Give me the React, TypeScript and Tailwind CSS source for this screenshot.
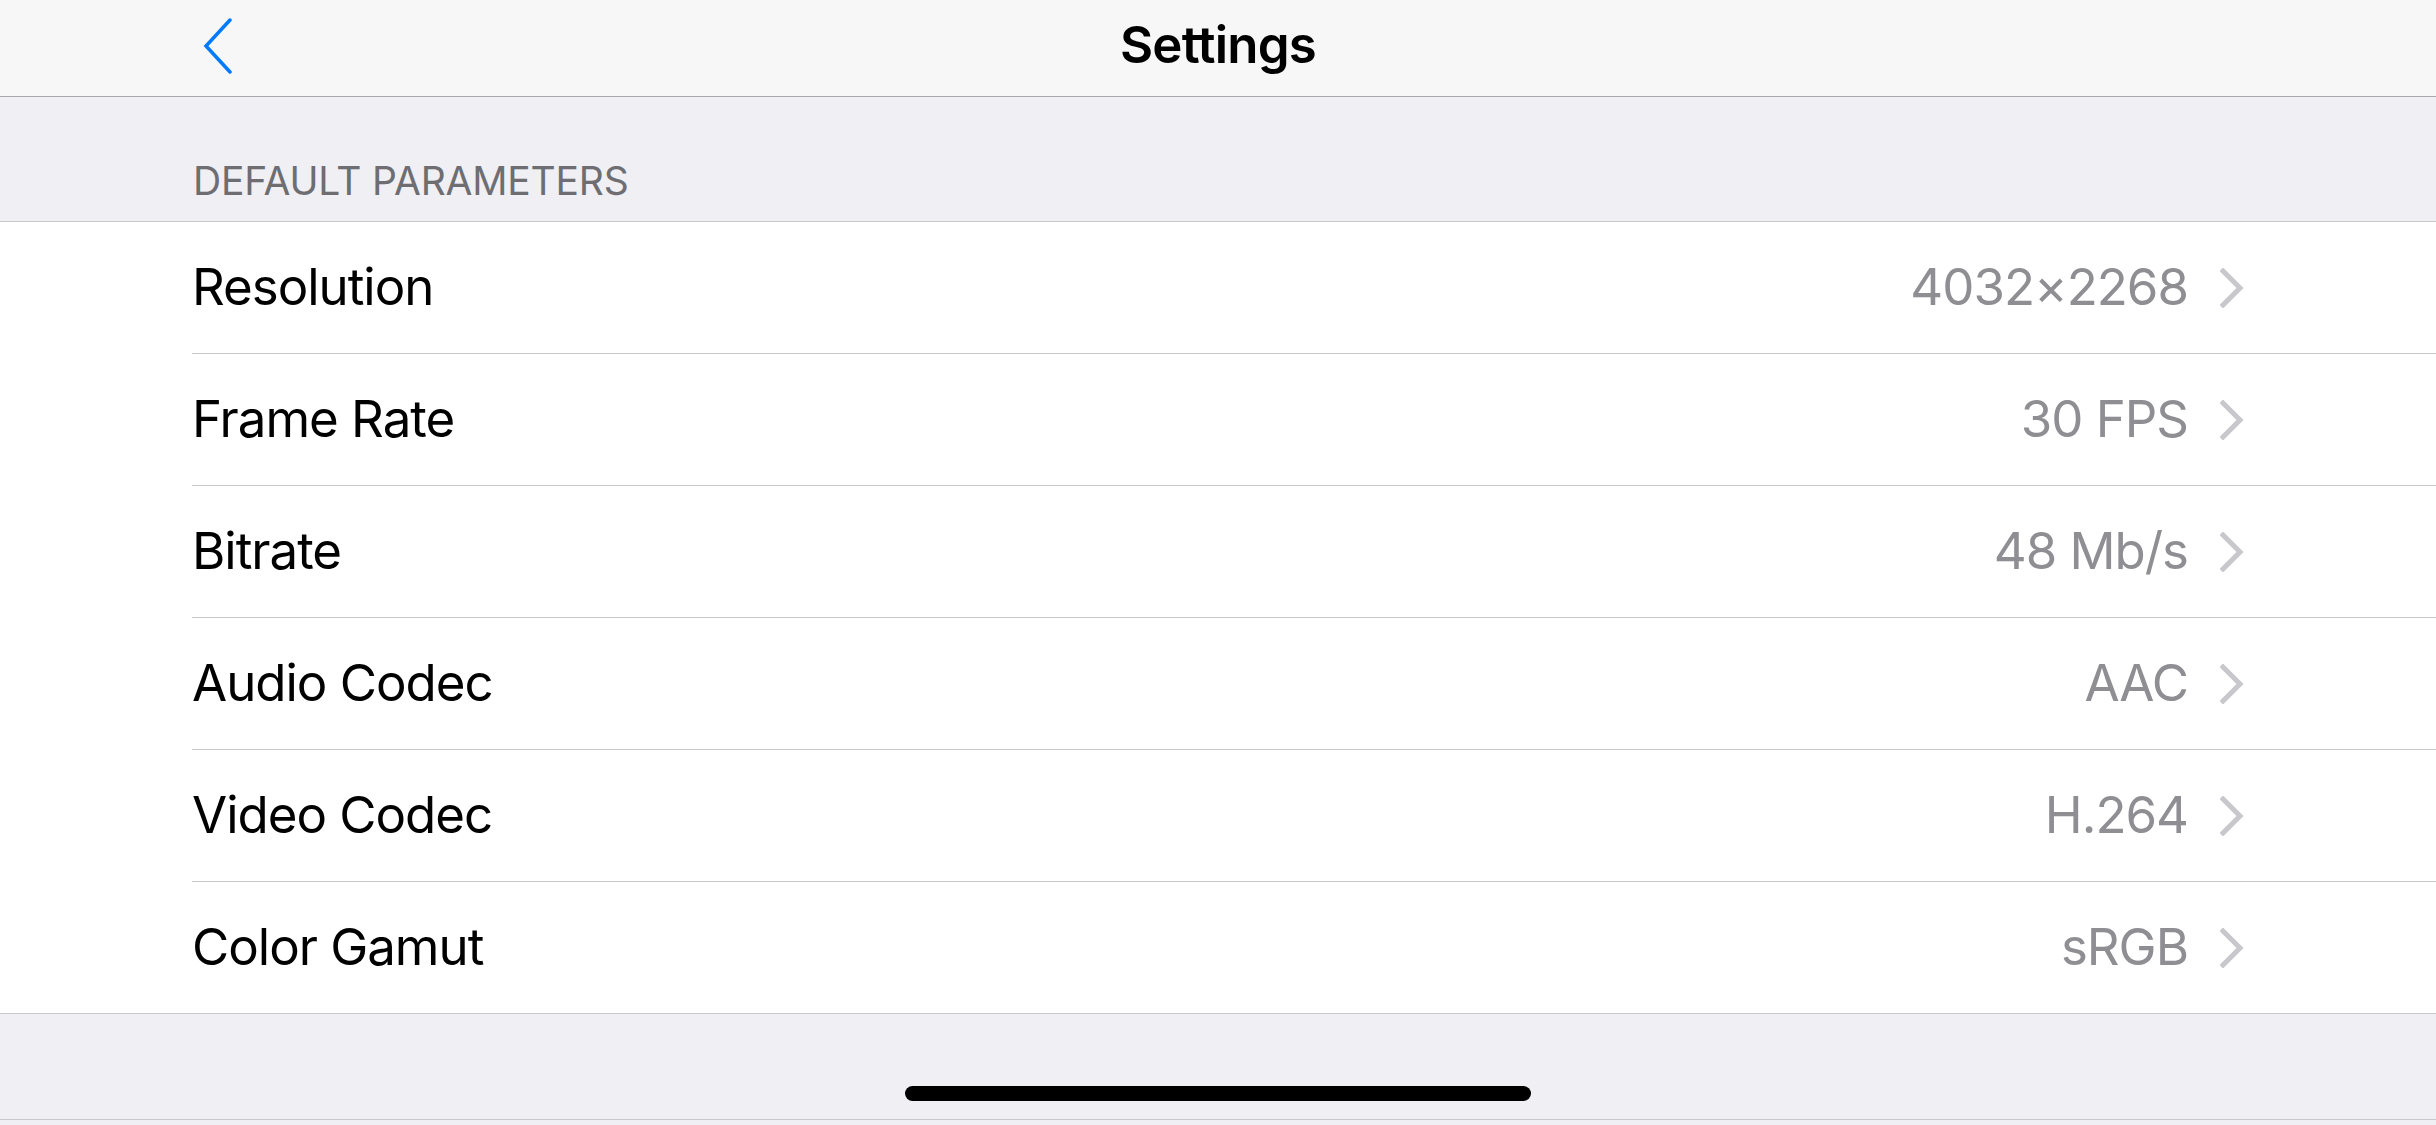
const rows = [
  { label: 'Resolution', value: '4032×2268' },
  { label: 'Frame Rate', value: '30 FPS' },
  { label: 'Bitrate', value: '48 Mb/s' },
  { label: 'Audio Codec', value: 'AAC' },
  { label: 'Video Codec', value: 'H.264' },
  { label: 'Color Gamut', value: 'sRGB' },
];

function BackChevron() {
  return (
    <svg width="30" height="56" viewBox="0 0 30 56" fill="none">
      <polyline
        points="27,2 3,28 27,54"
        stroke="#007aff"
        strokeWidth="3.5"
        strokeLinecap="round"
        strokeLinejoin="miter"
      />
    </svg>
  );
}

function RowChevron() {
  return (
    <svg width="24" height="40" viewBox="0 0 24 40" fill="none">
      <polyline
        points="3,3 20,20 3,37"
        stroke="#c7c7cc"
        strokeWidth="5"
        strokeLinecap="square"
        strokeLinejoin="miter"
      />
    </svg>
  );
}

export default function App() {
  return (
    <div className="w-[2436px] h-[1125px] bg-[#efeff4] flex flex-col font-['Inter','Liberation_Sans',sans-serif] overflow-hidden">
      {/* nav bar */}
      <div className="h-[97px] shrink-0 bg-[#f7f7f7] border-b border-[#a9a9ac] grid grid-cols-[1fr_auto_1fr] items-center pb-[6px]">
        <div className="pl-[203px] pt-[1px] flex items-center">
          <BackChevron />
        </div>
        <h1 className="text-[51px] font-semibold text-black tracking-[-0.015em]">Settings</h1>
        <div />
      </div>

      {/* section header */}
      <div className="h-[124px] shrink-0 flex items-end pl-[193px] pb-[11px]">
        <span className="text-[39px] text-[#6d6d72] tracking-[-0.005em]">DEFAULT PARAMETERS</span>
      </div>

      {/* list */}
      <div className="bg-white border-t border-b border-[#c8c7cc] shrink-0">
        {rows.map((row, i) => (
          <div key={row.label} className="pl-[192px]">
            <div
              className={
                'flex items-center justify-between pr-[192px] ' +
                (i < rows.length - 1 ? 'h-[132px] border-b border-[#c8c7cc]' : 'h-[131px]')
              }
            >
              <span className="text-[51px] text-black tracking-[-0.02em]">{row.label}</span>
              <div className="flex items-center gap-[32px]">
                <span className="text-[51px] text-[#8e8e93] tracking-[-0.02em]">{row.value}</span>
                <RowChevron />
              </div>
            </div>
          </div>
        ))}
      </div>

      {/* bottom area with home indicator */}
      <div className="h-[106px] shrink-0 border-b border-[#c8c7cc] flex items-end justify-center pb-[18px]">
        <div className="w-[626px] h-[15px] rounded-full bg-black" />
      </div>
    </div>
  );
}
